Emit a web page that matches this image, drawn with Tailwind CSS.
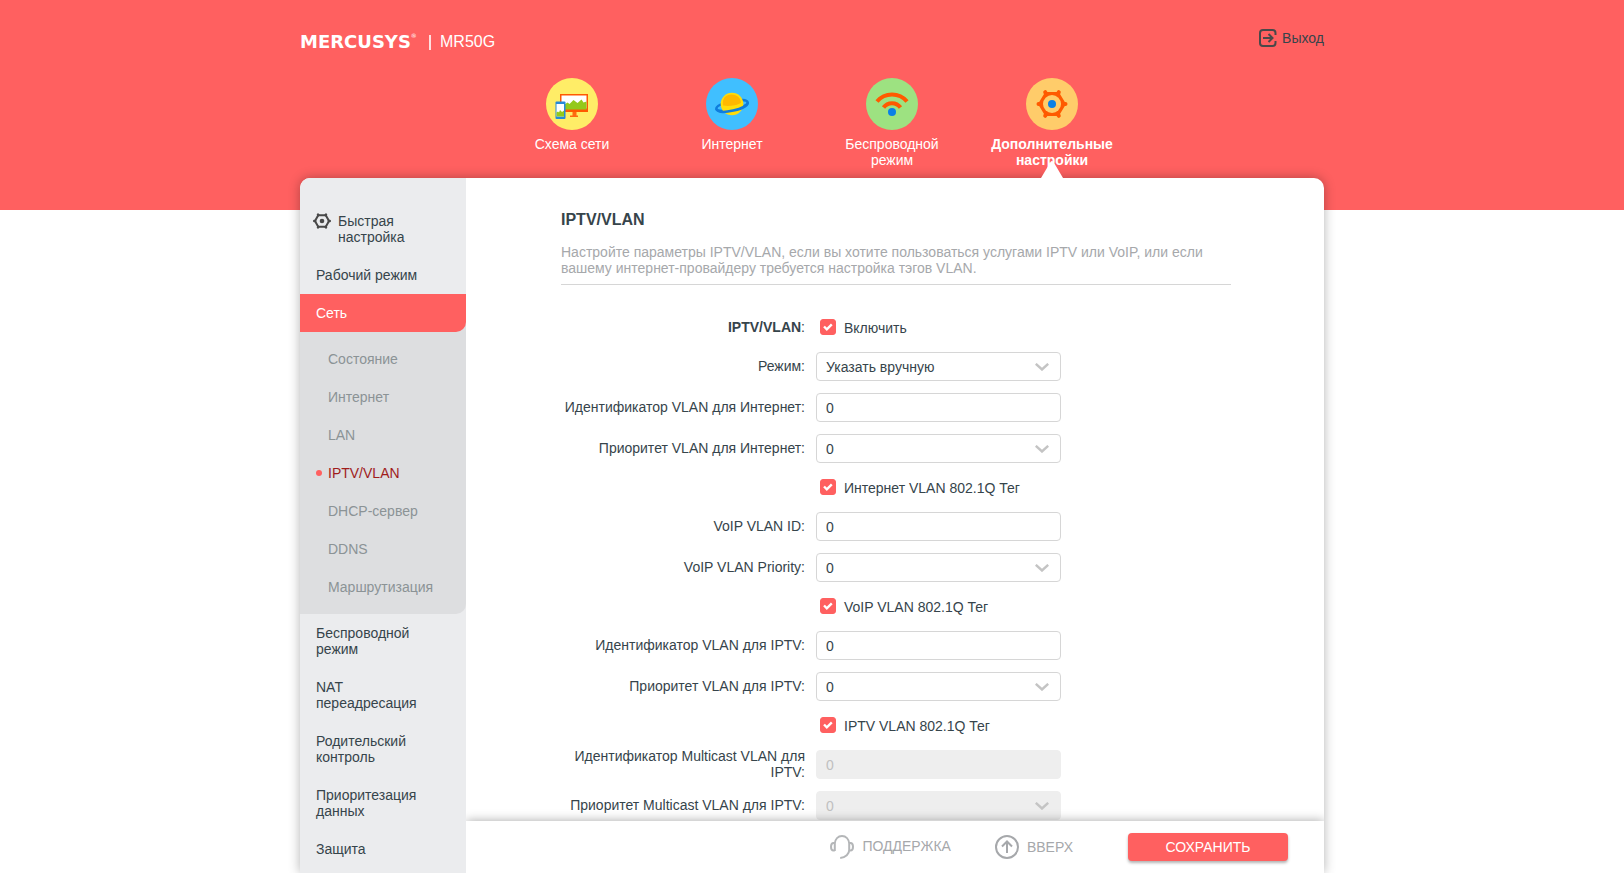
<!DOCTYPE html>
<html lang="ru">
<head>
<meta charset="utf-8">
<meta name="viewport" content="width=device-width, initial-scale=1">
<title>MR50G</title>
<script src="https://cdn.jsdelivr.net/npm/@tailwindcss/browser@4"></script>
</head>
<body class="flex h-screen flex-col overflow-hidden bg-white font-['Liberation_Sans',Arial,sans-serif] text-sm leading-4 text-[#36444b]">

<header class="h-[210px] shrink-0 bg-[#ff6060] text-white">
  <div class="mx-auto max-w-5xl">
    <div class="flex items-start justify-between pt-[29px]">
      <div class="flex items-center pt-[3px] text-base leading-5">
        <a href="#" class="flex w-[117px] items-start font-['DejaVu_Sans',sans-serif] text-lg leading-5 font-bold">MERCUSYS<span class="text-[6px] leading-2 font-normal">®</span></a>
        <span class="ml-3 h-[15px] w-0.5 bg-white/80"></span>
        <span class="ml-[9px]">MR50G</span>
      </div>
      <a href="#" class="flex items-center gap-[5px] text-[#36444b]">
        <svg class="h-[18px] w-[18px]" viewBox="0 0 18 18" fill="none" stroke="#494949" stroke-width="2"><path d="M16.500 6V4a3 3 0 0 0-3-3H4a3 3 0 0 0-3 3v10a3 3 0 0 0 3 3h9.500a3 3 0 0 0 3-3v-2M4 9h9M9.500 5l4 4-4 4"/></svg>
        Выход
      </a>
    </div>
    <nav class="mt-[26px] ml-48 grid max-w-[640px] grid-cols-4 text-center">
      <a href="#" class="flex flex-col items-center gap-1.5">
        <svg class="size-[52px]" viewBox="0 0 52 52"><circle cx="26" cy="26" r="26" fill="#ffed67"/><path d="M14 16h28v18H14z" fill="#ff5a00"/><path d="M15.500 17.500h25v13h-25z" fill="#fff"/><path d="M15.500 31.500v-4l3-1 3-2 2 1.500 4-4 4 3 4-3.500 2 3 3-1v8z" fill="#94c91a"/><path d="M26.500 34h4v3.500h1.500V39h-8v-1.500h2.500z" fill="#ff6a10"/><rect x="9.500" y="23.500" width="10" height="17.500" rx="1" fill="#2789d8"/><path d="M10.500 26h7.500v12.500h-7.500z" fill="#fff"/><path d="M10.500 38.500v-4l1.500-1 1 1 1-2.500 2 2 2-1.500v6z" fill="#94c91a"/></svg>
        Схема сети
      </a>
      <a href="#" class="flex flex-col items-center gap-1.5">
        <svg class="size-[52px]" viewBox="0 0 52 52"><circle cx="26" cy="26" r="26" fill="#40bfff"/><ellipse cx="26" cy="27.500" rx="16" ry="4.500" transform="rotate(-12 26 27.500)" fill="none" stroke="#0f7ddd" stroke-width="2.500"/><circle cx="26" cy="26" r="11.300" fill="#ffdd0a"/><path d="M17 27.500c-1.500-8 4-11.500 9-11 5 .5 9 3.500 9 8.500-5 2.500-12 3.500-18 2.500z" fill="#ffb800"/><path d="M10.300 30.800c1 4 9.500 3.500 17 1.800 8-1.800 15-5 14.300-8.400" fill="none" stroke="#0f7ddd" stroke-width="2.600"/></svg>
        Интернет
      </a>
      <a href="#" class="flex flex-col items-center gap-1.5">
        <svg class="size-[52px]" viewBox="0 0 52 52"><circle cx="26" cy="26" r="26" fill="#9de281"/><g fill="none" stroke="#ff5a00" stroke-width="4"><path d="M11 23.500a19.500 19.500 0 0 1 30 0M17.500 29.500a10.500 10.500 0 0 1 17 0"/></g><circle cx="26" cy="34" r="4" fill="#0a80e6"/></svg>
        <span class="w-[110px]">Беспроводной режим</span>
      </a>
      <a href="#" aria-current="page" class="flex flex-col items-center gap-1.5 font-bold">
        <svg class="size-[52px]" viewBox="0 0 52 52"><circle cx="26" cy="26" r="26" fill="#ffcc6a"/><path d="M20 15.200h12L38.500 26 32 36.800H20L13.500 26z" fill="#ff5a00" stroke="#ff5a00" stroke-width="2.500" stroke-linejoin="round"/><path d="M12.500 26h27M19.200 14.200l13.600 23.600M32.800 14.200 19.200 37.800" stroke="#ff5a00" stroke-width="4" stroke-linecap="round"/><circle cx="26" cy="26" r="9" fill="#ffcc6a"/><circle cx="26" cy="26" r="4" fill="#0a80e6"/></svg>
        <span class="w-[130px]">Дополнительные настройки</span>
      </a>
    </nav>
  </div>
</header>

<div class="relative mx-auto -mt-8 flex min-h-0 w-full max-w-5xl flex-1 rounded-t-[10px] bg-white shadow-[0_0_12px_rgba(0,0,0,0.3)]">
  <!-- pointer to the active tab -->
  <svg class="absolute -top-[17px] left-[741px] h-[17px] w-[22px]" viewBox="0 0 22 17"><path d="M0 17 9.500 1q1.500-2 3 0L22 17z" fill="#fff"/></svg>

  <aside class="w-[166px] shrink-0 overflow-hidden rounded-tl-[10px] bg-[#ebecee] pt-6">
    <a href="#" class="flex gap-[7px] py-[11px] pr-4 pl-[13px]">
      <svg class="h-4 w-[18px] shrink-0" viewBox="0 0 18 16"><g fill="none" stroke="#494949"><path d="M5.200 2.200h7.600L16 8l-3.200 5.800H5.200L2 8z" stroke-width="2"/><path d="M1.200 8h1M15.800 8h1M5 1.500l.4.700M12.600 13.800l.4.700M13 1.500l-.4.700M5.400 13.800l-.4.700" stroke-width="2.400" stroke-linecap="round"/></g><circle cx="9" cy="8" r="2.300" fill="#494949"/></svg>
      <span>Быстрая настройка</span>
    </a>
    <a href="#" class="block px-4 py-[11px]">Рабочий режим</a>
    <div class="bg-[#dddee0]"><a href="#" class="block rounded-br-[10px] bg-[#ff6060] px-4 py-[11px] text-white">Сеть</a></div>
    <ul class="rounded-br-[10px] bg-[#dddee0] py-2 text-[#8b9396]">
      <li><a href="#" class="block py-[11px] pl-7">Состояние</a></li>
      <li><a href="#" class="block py-[11px] pl-7">Интернет</a></li>
      <li><a href="#" class="block py-[11px] pl-7">LAN</a></li>
      <li><a href="#" aria-current="page" class="flex items-center gap-1.5 py-[11px] pl-4 text-[#a01c1c]"><span class="size-1.5 rounded-full bg-[#ff6060]"></span>IPTV/VLAN</a></li>
      <li><a href="#" class="block py-[11px] pl-7">DHCP-сервер</a></li>
      <li><a href="#" class="block py-[11px] pl-7">DDNS</a></li>
      <li><a href="#" class="block py-[11px] pl-7">Маршрутизация</a></li>
    </ul>
    <a href="#" class="block py-[11px] pr-10 pl-4">Беспроводной режим</a>
    <a href="#" class="block py-[11px] pr-10 pl-4">NAT переадресация</a>
    <a href="#" class="block py-[11px] pr-10 pl-4">Родительский контроль</a>
    <a href="#" class="block py-[11px] pr-10 pl-4">Приоритезация данных</a>
    <a href="#" class="block px-4 py-[11px]">Защита</a>
  </aside>

  <main class="flex min-w-0 flex-1 flex-col">
    <div class="min-h-0 flex-1 overflow-hidden pt-[33px] pr-[93px] pl-[95px]">
      <h1 class="text-base leading-[18px] font-bold">IPTV/VLAN</h1>
      <p class="mt-[15px] border-b border-[#d6d6d6] pb-2 text-[#a6a8ab]">Настройте параметры IPTV/VLAN, если вы хотите пользоваться услугами IPTV или VoIP, или если вашему интернет-провайдеру требуется настройка тэгов VLAN.</p>

      <form class="mt-[30px] flex flex-col gap-3">
        <div class="grid min-h-[25px] grid-cols-[244px_245px] items-center gap-x-[11px]">
          <span class="pb-px text-right"><b>IPTV/VLAN</b>:</span>
          <label class="flex items-center gap-2 pl-1"><span class="grid h-[18px] w-4"><input type="checkbox" checked class="col-start-1 row-start-1 size-4 appearance-none rounded-[3px] border border-[#d6d6d6] checked:border-[#ff6060] checked:bg-[#ff6060]"><svg class="pointer-events-none col-start-1 row-start-1 size-4" viewBox="0 0 16 16" fill="none" stroke="#fff" stroke-width="2.400"><path d="m4 7.500 2.800 2.800 5-5"/></svg></span><span class="pt-px">Включить</span></label>
        </div>
        <div class="grid min-h-[29px] grid-cols-[244px_245px] items-center gap-x-[11px]">
          <label for="mode" class="pb-px text-right">Режим:</label>
          <div class="relative"><select id="mode" class="block h-[29px] w-full appearance-none rounded border border-[#d6d6d6] bg-white px-[9px] pt-px"><option>Указать вручную</option></select><svg class="pointer-events-none absolute top-[11px] right-3 h-2 w-3.5" viewBox="0 0 14 8" fill="none" stroke="#c4c4c4" stroke-width="2.400"><path d="m.8.8 6.200 5.700L13.200.8"/></svg></div>
        </div>
        <div class="grid min-h-[29px] grid-cols-[244px_245px] items-center gap-x-[11px]">
          <label for="inet-id" class="pb-px text-right">Идентификатор VLAN для Интернет:</label>
          <input id="inet-id" type="text" value="0" class="block h-[29px] w-full rounded border border-[#d6d6d6] bg-white px-[9px] pt-px">
        </div>
        <div class="grid min-h-[29px] grid-cols-[244px_245px] items-center gap-x-[11px]">
          <label for="inet-prio" class="pb-px text-right">Приоритет VLAN для Интернет:</label>
          <div class="relative"><select id="inet-prio" class="block h-[29px] w-full appearance-none rounded border border-[#d6d6d6] bg-white px-[9px] pt-px"><option>0</option></select><svg class="pointer-events-none absolute top-[11px] right-3 h-2 w-3.5" viewBox="0 0 14 8" fill="none" stroke="#c4c4c4" stroke-width="2.400"><path d="m.8.8 6.200 5.700L13.200.8"/></svg></div>
        </div>
        <div class="grid min-h-[25px] grid-cols-[244px_245px] items-center gap-x-[11px]">
          <label class="col-start-2 flex items-center gap-2 pl-1"><span class="grid h-[18px] w-4"><input type="checkbox" checked class="col-start-1 row-start-1 size-4 appearance-none rounded-[3px] border border-[#d6d6d6] checked:border-[#ff6060] checked:bg-[#ff6060]"><svg class="pointer-events-none col-start-1 row-start-1 size-4" viewBox="0 0 16 16" fill="none" stroke="#fff" stroke-width="2.400"><path d="m4 7.500 2.800 2.800 5-5"/></svg></span><span class="pt-px">Интернет VLAN 802.1Q Тег</span></label>
        </div>
        <div class="grid min-h-[29px] grid-cols-[244px_245px] items-center gap-x-[11px]">
          <label for="voip-id" class="pb-px text-right">VoIP VLAN ID:</label>
          <input id="voip-id" type="text" value="0" class="block h-[29px] w-full rounded border border-[#d6d6d6] bg-white px-[9px] pt-px">
        </div>
        <div class="grid min-h-[29px] grid-cols-[244px_245px] items-center gap-x-[11px]">
          <label for="voip-prio" class="pb-px text-right">VoIP VLAN Priority:</label>
          <div class="relative"><select id="voip-prio" class="block h-[29px] w-full appearance-none rounded border border-[#d6d6d6] bg-white px-[9px] pt-px"><option>0</option></select><svg class="pointer-events-none absolute top-[11px] right-3 h-2 w-3.5" viewBox="0 0 14 8" fill="none" stroke="#c4c4c4" stroke-width="2.400"><path d="m.8.8 6.200 5.700L13.200.8"/></svg></div>
        </div>
        <div class="grid min-h-[25px] grid-cols-[244px_245px] items-center gap-x-[11px]">
          <label class="col-start-2 flex items-center gap-2 pl-1"><span class="grid h-[18px] w-4"><input type="checkbox" checked class="col-start-1 row-start-1 size-4 appearance-none rounded-[3px] border border-[#d6d6d6] checked:border-[#ff6060] checked:bg-[#ff6060]"><svg class="pointer-events-none col-start-1 row-start-1 size-4" viewBox="0 0 16 16" fill="none" stroke="#fff" stroke-width="2.400"><path d="m4 7.500 2.800 2.800 5-5"/></svg></span><span class="pt-px">VoIP VLAN 802.1Q Тег</span></label>
        </div>
        <div class="grid min-h-[29px] grid-cols-[244px_245px] items-center gap-x-[11px]">
          <label for="iptv-id" class="pb-px text-right">Идентификатор VLAN для IPTV:</label>
          <input id="iptv-id" type="text" value="0" class="block h-[29px] w-full rounded border border-[#d6d6d6] bg-white px-[9px] pt-px">
        </div>
        <div class="grid min-h-[29px] grid-cols-[244px_245px] items-center gap-x-[11px]">
          <label for="iptv-prio" class="pb-px text-right">Приоритет VLAN для IPTV:</label>
          <div class="relative"><select id="iptv-prio" class="block h-[29px] w-full appearance-none rounded border border-[#d6d6d6] bg-white px-[9px] pt-px"><option>0</option></select><svg class="pointer-events-none absolute top-[11px] right-3 h-2 w-3.5" viewBox="0 0 14 8" fill="none" stroke="#c4c4c4" stroke-width="2.400"><path d="m.8.8 6.200 5.700L13.200.8"/></svg></div>
        </div>
        <div class="grid min-h-[25px] grid-cols-[244px_245px] items-center gap-x-[11px]">
          <label class="col-start-2 flex items-center gap-2 pl-1"><span class="grid h-[18px] w-4"><input type="checkbox" checked class="col-start-1 row-start-1 size-4 appearance-none rounded-[3px] border border-[#d6d6d6] checked:border-[#ff6060] checked:bg-[#ff6060]"><svg class="pointer-events-none col-start-1 row-start-1 size-4" viewBox="0 0 16 16" fill="none" stroke="#fff" stroke-width="2.400"><path d="m4 7.500 2.800 2.800 5-5"/></svg></span><span class="pt-px">IPTV VLAN 802.1Q Тег</span></label>
        </div>
        <div class="grid min-h-[29px] grid-cols-[244px_245px] items-center gap-x-[11px]">
          <label for="mc-id" class="-my-1 pb-px text-right">Идентификатор Multicast VLAN для IPTV:</label>
          <input id="mc-id" type="text" value="0" disabled class="block h-[29px] w-full rounded border border-[#eeeeee] bg-[#eeeeee] px-[9px] pt-px text-[#c0c0c0]">
        </div>
        <div class="grid min-h-[29px] grid-cols-[244px_245px] items-center gap-x-[11px]">
          <label for="mc-prio" class="pb-px text-right">Приоритет Multicast VLAN для IPTV:</label>
          <div class="relative"><select id="mc-prio" disabled class="block h-[29px] w-full appearance-none rounded border border-[#eeeeee] bg-[#eeeeee] px-[9px] pt-px text-[#c0c0c0] opacity-100"><option>0</option></select><svg class="pointer-events-none absolute top-[11px] right-3 h-2 w-3.5" viewBox="0 0 14 8" fill="none" stroke="#c4c4c4" stroke-width="2.400"><path d="m.8.8 6.200 5.700L13.200.8"/></svg></div>
        </div>
      </form>
    </div>

    <footer class="relative h-[52px] shrink-0">
      <!-- soft edge over the scrolled form -->
      <div class="pointer-events-none absolute inset-x-0 -top-3 h-3 overflow-hidden"><div class="mt-3 h-10 shadow-[0_0_10px_rgba(0,0,0,0.35)]"></div></div>
      <div class="flex h-full items-center justify-end bg-white pr-9 text-[#a6a8ab]">
        <a href="#" class="flex items-center gap-2">
          <svg class="size-6" viewBox="0 0 24 24" fill="none" stroke="#b4b6b8" stroke-width="2"><path d="M4.800 16V8.500C5.200 4.200 8 1 12 1s6.800 3.200 7.200 7.500V15c0 4-3.500 7.500-9 8M4.800 8H3.500C1.800 8 1 9.200 1 11.800S1.800 15.500 3.500 15.500h1.300M19.200 8h1.300C22.200 8 23 9.200 23 11.800s-.8 3.700-2.500 3.700h-1.300"/></svg>
          <span class="pb-0.5">ПОДДЕРЖКА</span>
        </a>
        <a href="#" class="ml-11 flex items-center gap-2">
          <svg class="size-6" viewBox="0 0 24 24" fill="none" stroke="#a6a8ab" stroke-width="2"><circle cx="12" cy="12" r="11"/><path d="M12 18V7M7 11.500l5-5 5 5"/></svg>
          ВВЕРХ
        </a>
        <button type="button" class="ml-[55px] h-7 w-40 rounded bg-[#ff6060] text-white shadow-[0_2px_3px_rgba(0,0,0,0.3)]">СОХРАНИТЬ</button>
      </div>
    </footer>
  </main>
</div>
</body>
</html>
